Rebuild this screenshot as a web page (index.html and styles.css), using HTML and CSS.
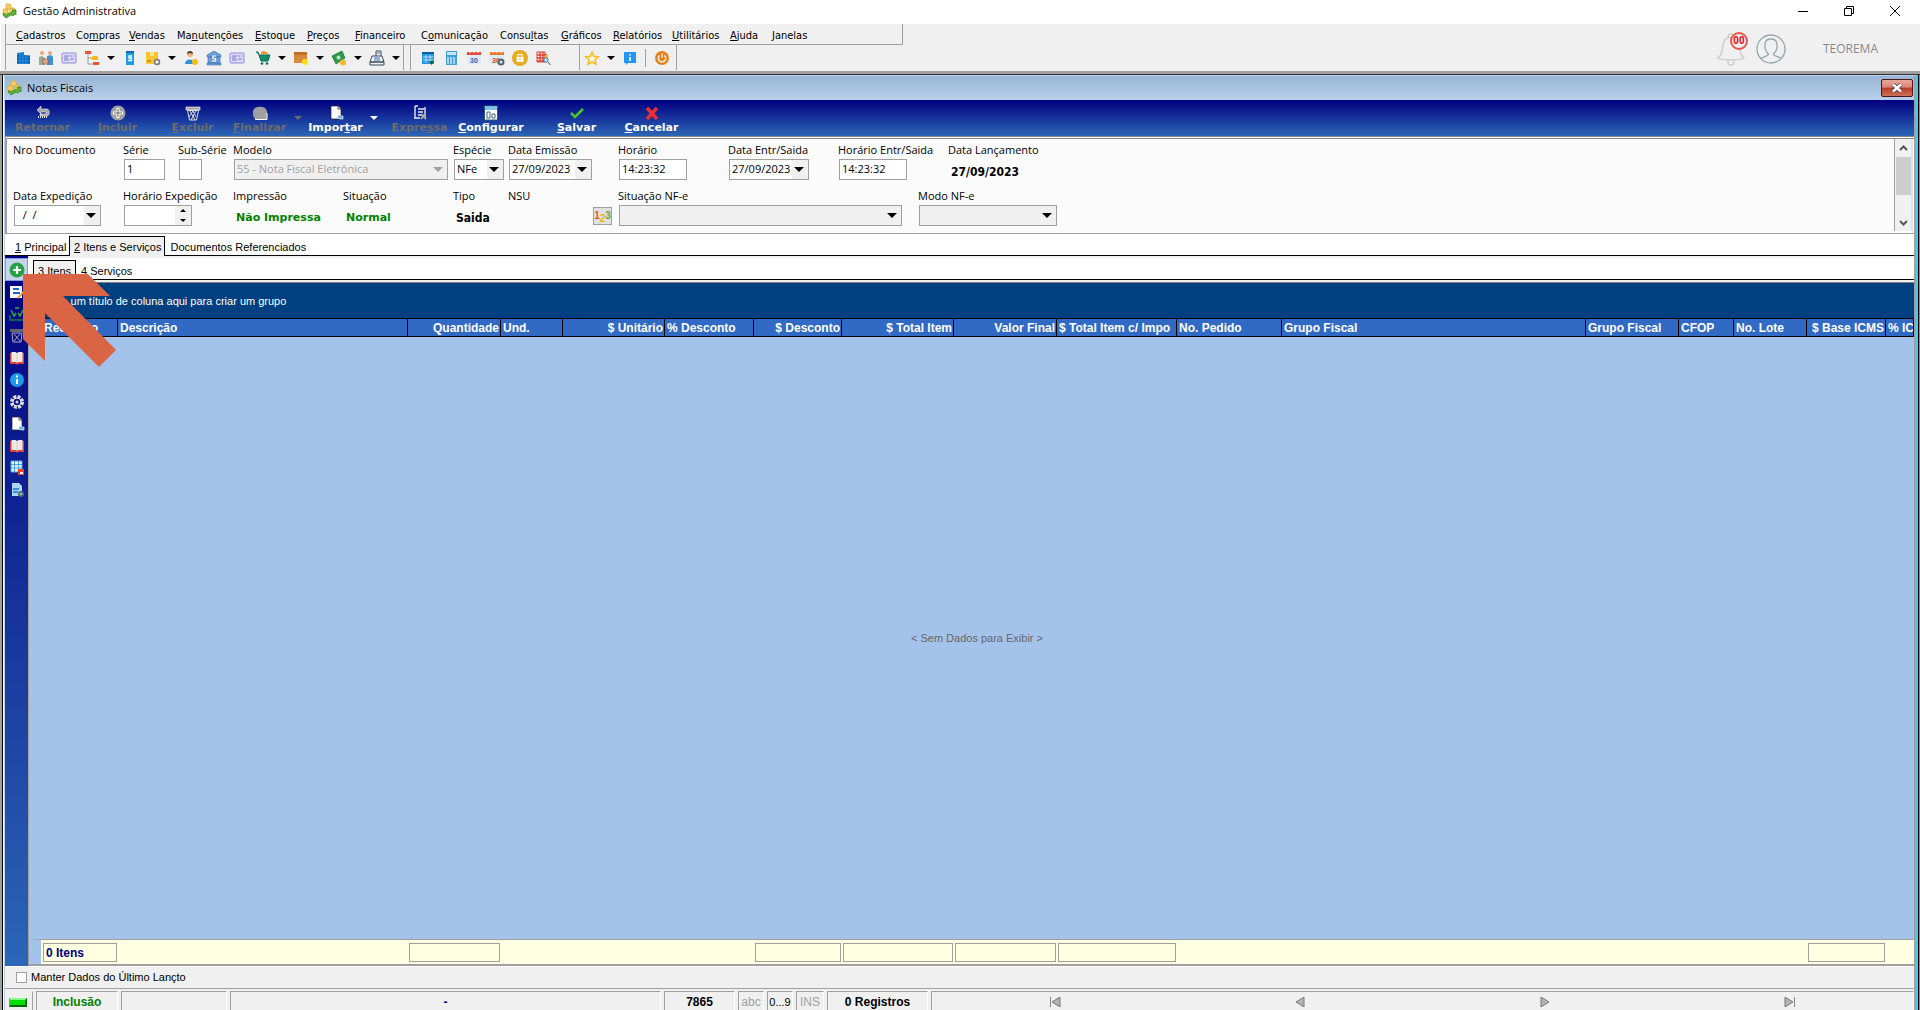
FILE: index.html
```html
<!DOCTYPE html>
<html lang="pt-BR">
<head>
<meta charset="utf-8">
<title>Gestão Administrativa</title>
<link rel="stylesheet" href="styles.css">
</head>
<body>
<svg class="sprite" aria-hidden="true">
  <symbol id="logo" viewBox="0 0 16 16"><path d="M4 1h4l1 1v4H4zM1 6h5v5H1z" fill="#f4cf5e" stroke="#d9a93a" stroke-width=".7"/><path d="M9 5h3l1 1v4H8V6z" fill="#f1c65a" stroke="#d9a93a" stroke-width=".7"/><path d="M1 12l3 3 5-3 2 1 2-2 1 1V7h-4l1 1-2 2H7l-3 2-2-2z" fill="#5fb336" stroke="#3a7d22" stroke-width=".7"/></symbol>
  <symbol id="card" viewBox="0 0 16 16"><rect x="1" y="3" width="14" height="10" rx="1" fill="#dcdafa" stroke="#8f8bdc"/><path d="M3 6h5M3 8h4M3 10h5M9 6h2M12 6h1M9 9h4" stroke="#7d79cf"/></symbol>
  <symbol id="book" viewBox="0 0 16 16"><path d="M1 3h14v11H9l-1 1-1-1H1z" fill="#d9433a"/><path d="M2.500 2h4L8 3l1.500-1h4v10H9l-1 1-1-1H2.500z" fill="#eee9e6"/><path d="M8 3v9" stroke="#cfc8c4" stroke-width=".7"/></symbol>
  <symbol id="page" viewBox="0 0 16 16"><path d="M3 1h7l3 3v10H3z" fill="#fff" stroke="#222" stroke-width=".7"/><path d="M10 1v3h3" fill="#ddd" stroke="#222" stroke-width=".7"/><path d="M9 12l3-3v2h3v3h-3z" fill="#5aaee0" stroke="#fff" stroke-width=".6"/></symbol>
  <symbol id="cal" viewBox="0 0 16 16"><path d="M1 4h14v10H1z" fill="#dcebf8"/><path d="M1 2h14v3H1z" fill="currentColor"/><path d="M4 1v2M8 1v2M12 1v2" stroke="#fff"/></symbol>
</svg>

<header class="titlebar">
  <svg class="i16"><use href="#logo"/></svg>
  <h1>Gestão Administrativa</h1>
  <div class="wincontrols">
    <button aria-label="Minimizar"><svg viewBox="0 0 10 10"><path d="M0 5.500h10" stroke="#000" fill="none"/></svg></button>
    <button aria-label="Restaurar"><svg viewBox="0 0 10 10"><path d="M.5 2.500h7v7h-7zM2.500 2.500v-2h7v7h-2" stroke="#000" fill="none"/></svg></button>
    <button aria-label="Fechar"><svg viewBox="0 0 10 10"><path d="M0 0l10 10M10 0L0 10" stroke="#000" fill="none"/></svg></button>
  </div>
</header>

<div class="top">
  <div class="bars">
    <nav class="menubar">
      <a href="#"><u>C</u>adastros</a><a href="#">Co<u>m</u>pras</a><a href="#"><u>V</u>endas</a><a href="#">Ma<u>n</u>utenções</a><a href="#"><u>E</u>stoque</a><a href="#"><u>P</u>reços</a><a href="#"><u>F</u>inanceiro</a><a href="#">C<u>o</u>municação</a><a href="#">Consu<u>l</u>tas</a><a href="#"><u>G</u>ráficos</a><a href="#"><u>R</u>elatórios</a><a href="#"><u>U</u>tilitários</a><a href="#"><u>A</u>juda</a><a href="#"><u>J</u>anelas</a>
    </nav>
    <div class="iconbar">
      <div class="group group-main">
        <button aria-label="Empresas"><svg viewBox="0 0 16 16"><path d="M2 3l7-1v3l6 1v8H2z" fill="#1380dc"/><path d="M2 6h13M2 9h13M2 12h13" stroke="#0a4f94"/><path d="M5 4v10M8 5v9M11 6v8" stroke="#3fa4ee" stroke-width=".7"/></svg></button>
        <button aria-label="Pessoas"><svg viewBox="0 0 16 16"><circle cx="4" cy="3" r="2" fill="#e8a77c"/><circle cx="12" cy="3" r="2" fill="#e8a77c"/><path d="M1 15V7l3-1 3 2v7z" fill="#8fae98"/><path d="M9 15V6l4-1 2 2v8z" fill="#3d8fd6"/><path d="M5 9h5v5H5z" fill="#e9a28b" stroke="#a9563c" stroke-width=".7"/></svg></button>
        <button aria-label="Cadastro"><svg><use href="#card"/></svg></button>
        <button aria-label="Estrutura"><svg viewBox="0 0 16 16"><path d="M4 4v10h5M4 8h5" fill="none" stroke="#888" stroke-width=".8"/><path d="M1 1h6v3H1zM9 12h6v3H9z" fill="#f0512d"/><path d="M8 6h6v4H8z" fill="#fbb917"/></svg></button>
        <button class="drop" aria-label="Mais estruturas"></button>
        <button aria-label="Preço"><svg viewBox="0 0 16 16"><path d="M4 1h8v14H4z" fill="#1b9be8"/><path d="M4 1h8v2H4z" fill="#0c6fb4"/><path d="M10 6H7v2h2.500v2.500H6" fill="none" stroke="#fff" stroke-width="1.300"/></svg></button>
        <button aria-label="Produtos"><svg viewBox="0 0 16 16"><path d="M1 2h12v12H1z" fill="#f9c52f"/><path d="M5 2h4v4H5z" fill="#fbe08b"/><path d="M2 11h4" stroke="#8a6a10"/><circle cx="12" cy="12" r="2.500" fill="#eee" stroke="#777" stroke-width="1.500"/></svg></button>
        <button class="drop" aria-label="Mais produtos"></button>
        <button aria-label="Cliente"><svg viewBox="0 0 16 16"><circle cx="7" cy="4" r="3" fill="#f0b078"/><path d="M4 4c0-4 6-4 6 0L7 3z" fill="#443"/><path d="M2 14c0-6 9-6 10 0z" fill="#2b8fdd"/><circle cx="12" cy="12" r="3" fill="#fbb917"/></svg></button>
        <button aria-label="Banco"><svg viewBox="0 0 16 16"><path d="M1 5l7-4 7 4v2H1zM1 13h14v2H1zM2 7h12v6H2z" fill="#6d9fd6" stroke="#3d74b5" stroke-width=".6"/><path d="M10 6H7v2.500h2.500V11H6" fill="none" stroke="#fff" stroke-width="1.200"/></svg></button>
        <button aria-label="Documento"><svg><use href="#card"/></svg></button>
        <button class="spaced" aria-label="Vendas"><svg viewBox="0 0 16 16"><path d="M1 2h2l3 9h7l2-6H4" fill="#178a6b" stroke="#0f6d53"/><path d="M6 4V2l3-1 4 2v1z" fill="#f6941d"/><circle cx="7" cy="13.500" r="1.300" fill="#0f6d53"/><circle cx="12" cy="13.500" r="1.300" fill="#0f6d53"/></svg></button>
        <button class="drop" aria-label="Mais vendas"></button>
        <button aria-label="Estoque"><svg viewBox="0 0 16 16"><path d="M1 2h13v11H1z" fill="#d88a3c"/><path d="M1 2h13v3H1z" fill="#c06f22"/><circle cx="12" cy="12" r="3" fill="#ffe11b"/></svg></button>
        <button class="drop" aria-label="Mais estoque"></button>
        <button aria-label="Dinheiro"><svg viewBox="0 0 16 16"><path d="M1 6l10-5 3 7-9 6z" fill="#2f9a4a" stroke="#176a2c" stroke-width=".7"/><circle cx="7.500" cy="7.500" r="2" fill="#bfe7c4"/><circle cx="12" cy="12.500" r="3" fill="#f5b62a"/></svg></button>
        <button class="drop" aria-label="Mais dinheiro"></button>
        <button aria-label="Caixa"><svg viewBox="0 0 16 16"><path d="M7 6V1h5v5M3 6h10l2 6H1zM1 12h14v3H1z" fill="#eef2f7" stroke="#3c4856"/><path d="M5 8h6M5 10h6M8 3h3" stroke="#3c78c0"/></svg></button>
        <button class="drop" aria-label="Mais caixa"></button>
      </div>
      <div class="group group-tools">
        <button aria-label="Agenda"><svg viewBox="0 0 16 16"><path d="M2 2h12v12H2z" fill="#2196e8"/><path d="M2 2h12v2H2z" fill="#0c5f9e"/><path d="M3 7h10M3 10h10M6 5v8M10 5v8" stroke="#b5defa"/><path d="M9 11h5l-2.500 4z" fill="#153"/></svg></button>
        <button aria-label="Calculadora"><svg viewBox="0 0 16 16"><path d="M3 1h11v14H3z" fill="#3f9fd9"/><path d="M4 2h9v3H4z" fill="#c6e8fb"/><path d="M5 7v7M8 7v7M11 7v7" stroke="#c6e8fb" stroke-width="1.500"/></svg></button>
        <button class="red" aria-label="Calendário"><svg viewBox="0 0 16 16"><use href="#cal"/><text x="8" y="12.500" class="caltext">30</text></svg></button>
        <button class="orange" aria-label="Configurar calendário"><svg viewBox="0 0 16 16"><use href="#cal"/><text x="7" y="12.500" class="caltext calred">30</text><circle cx="12" cy="12" r="2.500" fill="none" stroke="#4f6270" stroke-width="2"/></svg></button>
        <button aria-label="Bloquear"><svg viewBox="0 0 16 16"><circle cx="8" cy="8" r="8" fill="#e6ab1c"/><path d="M4.500 7h7v5h-7z" fill="#fff"/><path d="M6 7V4.500h4V7" fill="none" stroke="#fff" stroke-width="1.200"/><path d="M8 8v2" stroke="#e6ab1c"/></svg></button>
        <button aria-label="Pesquisar grade"><svg viewBox="0 0 16 16"><path d="M2 2h8v10H2z" fill="#fff" stroke="#e03c31"/><path d="M2 5h10M2 8h10M2 11h7M5 2v10M8 2v10" stroke="#e03c31" stroke-width="1.300"/><path d="M10 5h3v3h-3z" fill="#fbb917"/><circle cx="11" cy="10" r="2.200" fill="#bfe3fa" stroke="#3a7fb5"/><path d="M13 12l2.500 3" stroke="#555"/></svg></button>
      </div>
      <div class="group group-fav">
        <button aria-label="Favoritos"><svg viewBox="0 0 16 16"><path d="M8 2l1.800 4.300 4.700.4-3.500 3 1 4.500L8 11.800 4 14.200l1-4.500-3.500-3 4.700-.4z" fill="#fff6d5" stroke="#fbb917" stroke-width="1.400"/></svg></button>
        <button class="drop" aria-label="Mais favoritos"></button>
        <button aria-label="Informação"><svg viewBox="0 0 16 16"><path d="M2 2h12v11H6l-2 2v-2H2z" fill="#2196f3"/><path d="M8 4v1.500M8 7v4" stroke="#fff" stroke-width="1.600"/></svg></button>
        <span class="vsep"></span>
        <button aria-label="Sair"><svg viewBox="0 0 16 16"><circle cx="8" cy="8" r="7" fill="#e8811f"/><path d="M5.500 5.500a3.700 3.700 0 1 0 5 0M8 3.500v4" fill="none" stroke="#fff" stroke-width="1.300"/></svg></button>
      </div>
    </div>
  </div>
  <div class="user">
    <div class="bell">
      <svg viewBox="0 0 28 34"><path d="M11 5a3 3 0 0 1 6 0M11 28v2a3 3 0 0 0 6 0v-2M1 26c4-3 4-7 5-13C7 7 10 5 14 5s7 2 8 8c1 6 1 10 5 13-3 2.500-23 2.500-26 0z" fill="none" stroke="#cfcfcf" stroke-width="1.600"/></svg>
      <span class="badge">00</span>
    </div>
    <svg class="avatar" viewBox="0 0 30 30"><circle cx="15" cy="15" r="14" fill="none" stroke="#95a5a6" stroke-width="1.300"/><path d="M5 25c1-3 7-2 7.500-5-4-3-4-9-3-12 1.500-4 9.500-4 11 0 1 3 1 9-3 12 .5 3 6.500 2 7.500 5" fill="none" stroke="#95a5a6" stroke-width="1.300"/></svg>
    <span class="username">TEOREMA</span>
  </div>
</div>

<main class="mdi">
  <div class="mdi-title">
    <svg class="i16"><use href="#logo"/></svg>
    <h2>Notas Fiscais</h2>
    <button class="mdi-close" aria-label="Fechar janela"><svg viewBox="0 0 12 10"><path d="M2 1.500l8 7M10 1.500l-8 7" stroke="#445" stroke-width="4"/><path d="M2 1.500l8 7M10 1.500l-8 7" stroke="#fff" stroke-width="2.400"/></svg></button>
  </div>

  <div class="actions">
    <button class="act" disabled><svg viewBox="0 0 16 16"><path d="M2 5l4-4v3h6c3 0 3 7 0 7H5V9h6V7H6v2z" fill="#a8a8a8" stroke="#fff" stroke-width=".5"/><path d="M3 12h9" stroke="#ddd" stroke-dasharray="1 1" stroke-width="2"/></svg><span>Retornar</span></button>
    <button class="act" disabled><svg viewBox="0 0 16 16"><circle cx="8" cy="8" r="7.500" fill="#a0a0a0"/><path d="M8 3v10M3 8h10" stroke="#fff" stroke-width="3"/><path d="M8 4v8M4 8h8" stroke="#666" stroke-width="1"/></svg><span><u>I</u>ncluir</span></button>
    <button class="act" disabled><svg viewBox="0 0 16 16"><path d="M1 2h14v3H1z" fill="#a8a8a8" stroke="#fff" stroke-width=".6"/><path d="M2.500 5.500h11l-2 9.500h-7zM5 6l5 9M8 6l3 6M11 6L6 15M8 6l-4 6" fill="none" stroke="#ddd"/></svg><span><u>E</u>xcluir</span></button>
    <button class="act short" disabled><svg viewBox="0 0 16 16"><path d="M1 7c0-7 14-7 14 0v7H3c-2-2-2-5-2-7z" fill="#a0a0a0"/><path d="M3 14.500h12V8" fill="none" stroke="#fff"/></svg><span><u>F</u>inalizar</span></button>
    <button class="actdrop" aria-label="Opções de finalizar" disabled></button>
    <button class="act short"><svg><use href="#page"/></svg><span>Impor<u>t</u>ar</span></button>
    <button class="actdrop" aria-label="Opções de importar"></button>
    <button class="act" disabled><svg viewBox="0 0 16 16"><path d="M3 1v13M3 1h3M3 13h5M6 4h6M6 7h5M6 10h4M13 2v10" stroke="#e8e8e8" stroke-width="1.400"/><path d="M9 9l5 5M13 9l-4 5" stroke="#a8a8a8" stroke-width="2"/></svg><span>Expre<u>s</u>sa</span></button>
    <button class="act wide"><svg viewBox="0 0 16 16"><path d="M1.500 1h13v14h-13z" fill="#fff" stroke="#1c5c86"/><path d="M2 2h12v3H2z" fill="#7fc0ea"/><path d="M4 7h3v6H4zM9 9h3v4H9z" fill="#fff" stroke="#47657c"/></svg><span><u>C</u>onfigurar</span></button>
    <button class="act"><svg viewBox="0 0 16 16"><path d="M2 8l4 4 8-8" fill="none" stroke="#49c42c" stroke-width="2.500"/></svg><span><u>S</u>alvar</span></button>
    <button class="act"><svg viewBox="0 0 16 16"><path d="M3 3l10 11M13 3L3 14" stroke="#ea2f35" stroke-width="3.600"/></svg><span><u>C</u>ancelar</span></button>
  </div>

  <div class="formwrap">
    <form class="fields">
      <div class="field c1"><span class="lbl">Nro Documento</span></div>
      <div class="field c2"><label for="serie">Série</label><input id="serie" class="w-serie" value="1"></div>
      <div class="field c3"><label for="sub">Sub-Série</label><input id="sub" class="w-sub"></div>
      <div class="field c4"><label for="modelo">Modelo</label><span class="combo gray off w-modelo"><select id="modelo" disabled><option>55 - Nota Fiscal Eletrônica</option></select></span></div>
      <div class="field c6"><label for="especie">Espécie</label><span class="combo w-esp"><select id="especie"><option>NFe</option></select></span></div>
      <div class="field c7"><label for="emissao">Data Emissão</label><span class="combo w-date"><input id="emissao" value="27/09/2023"></span></div>
      <div class="field c8"><label for="hora">Horário</label><input id="hora" class="w-time" value="14:23:32"></div>
      <div class="field c9"><label for="entr">Data Entr/Saida</label><span class="combo w-date2"><input id="entr" value="27/09/2023"></span></div>
      <div class="field c10"><label for="hentr">Horário Entr/Saida</label><input id="hentr" class="w-time" value="14:23:32"></div>
      <div class="field c12"><span class="lbl">Data Lançamento</span><strong>27/09/2023</strong></div>

      <div class="field r2 c1"><label for="exped">Data Expedição</label><span class="combo w-exp"><input id="exped" value="  /  /"></span></div>
      <div class="field r2 c2"><label for="hexp">Horário Expedição</label><span class="spin w-time"><input id="hexp"><span class="spinbtns"><button type="button" aria-label="Aumentar"></button><button type="button" class="dn" aria-label="Diminuir"></button></span></span></div>
      <div class="field r2 c4"><span class="lbl">Impressão</span><strong class="green">Não Impressa</strong></div>
      <div class="field r2 c5"><span class="lbl">Situação</span><strong class="green">Normal</strong></div>
      <div class="field r2 c6"><span class="lbl">Tipo</span><strong>Saida</strong></div>
      <div class="field r2 c7"><span class="lbl">NSU</span><button type="button" class="nsu" aria-label="Gerar NSU"><b class="n1">1</b><b class="n2">2</b><b class="n3">3</b></button></div>
      <div class="field r2 c8"><label for="sitnfe">Situação NF-e</label><span class="combo gray w-sit"><select id="sitnfe"><option></option></select></span></div>
      <div class="field r2 c11"><label for="modo">Modo NF-e</label><span class="combo gray w-modo"><select id="modo"><option></option></select></span></div>
    </form>
    <div class="scroll">
      <svg viewBox="0 0 9 6"><path d="M1 5l3.500-3.500L8 5" fill="none" stroke="#555" stroke-width="2"/></svg>
      <span class="thumb"></span>
      <svg viewBox="0 0 9 6"><path d="M1 1l3.500 3.500L8 1" fill="none" stroke="#555" stroke-width="2"/></svg>
    </div>
  </div>

  <nav class="tabs">
    <a href="#"><u>1</u> Principal</a><a href="#" class="on"><u>2</u> Itens e Serviços</a><a href="#">Documentos Referenciados</a>
  </nav>

  <div class="work">
    <aside class="side">
      <button class="hot" aria-label="Adicionar"><svg viewBox="0 0 16 16"><circle cx="8" cy="8" r="7.500" fill="#25a244"/><path d="M8 4v8M4 8h8" stroke="#fff" stroke-width="2.200"/></svg></button>
      <button aria-label="Editar"><svg viewBox="0 0 16 16"><path d="M1 2h12v12H1z" fill="#f3f6fa"/><path d="M4 5h6M4 9h7" stroke="#1b64d2" stroke-width="2"/><path d="M8 14l6-7 1.500 1.500-6 6z" fill="#f59a1c"/></svg></button>
      <button aria-label="Reciclar"><svg viewBox="0 0 16 16"><path d="M1 9v5h14V9" fill="none" stroke="#1d7a45" stroke-width="1.300"/><path d="M6 2h4M2 4l3 6 2-3M14 4l-3 6-2-3" fill="none" stroke="#2fae35" stroke-width="1.400"/></svg></button>
      <button aria-label="Excluir item"><svg viewBox="0 0 16 16"><path d="M1 1h14v3H1z" fill="#666"/><path d="M3 5h10l-1 9H4zM5 6l6 7M11 6l-6 7" fill="none" stroke="#aab"/></svg></button>
      <button aria-label="Livro"><svg><use href="#book"/></svg></button>
      <button aria-label="Informações"><svg viewBox="0 0 16 16"><circle cx="8" cy="8" r="7" fill="#1c9be6"/><path d="M8 3.500v2M8 7v5" stroke="#fff" stroke-width="2"/></svg></button>
      <button aria-label="Configurações"><svg viewBox="0 0 16 16"><circle cx="8" cy="8" r="5.500" fill="none" stroke="#dcdcdc" stroke-width="3" stroke-dasharray="3 1.300"/><circle cx="8" cy="8" r="4" fill="none" stroke="#eee"/><circle cx="8" cy="8" r="1.500" fill="#ccc"/></svg></button>
      <button aria-label="Importar página"><svg><use href="#page"/></svg></button>
      <button aria-label="Catálogo"><svg><use href="#book"/></svg></button>
      <button aria-label="Salvar grade"><svg viewBox="0 0 16 16"><path d="M2 1h11v11H2z" fill="#eaf5ff"/><path d="M2 1h11v11H2zM2 4.500h11M2 8h11M5.500 1v11M9.500 1v11" fill="none" stroke="#4aa3e6"/><path d="M9 9h6v6H9z" fill="#f0431f"/><path d="M11 12h3v2h-3z" fill="#fff"/></svg></button>
      <button aria-label="Configurar relatório"><svg viewBox="0 0 16 16"><path d="M3 1h7l3 3v10H3z" fill="#a9d6fb"/><path d="M4 7h6M4 10h5" stroke="#1976d2" stroke-width="1.300"/><circle cx="12" cy="12" r="2.200" fill="#8ca" stroke="#4f6577" stroke-width="1.700"/></svg></button>
    </aside>
    <section class="detail">
      <nav class="tabs sub">
        <a href="#" class="on">3 Itens</a><a href="#">4 Serviços</a>
      </nav>
      <div class="groupby">Arraste um título de coluna aqui para criar um grupo</div>
      <div class="gridbox">
        <table class="grid">
          <colgroup><col class="k1"><col class="k2"><col class="k3"><col class="k4"><col class="k5"><col class="k6"><col class="k7"><col class="k8"><col class="k9"><col class="k10"><col class="k11"><col class="k12"><col class="k3"><col class="k14"><col class="k15"><col class="k16"><col></colgroup>
          <thead><tr><th class="first">Reduzido</th><th>Descrição</th><th class="num">Quantidade</th><th>Und.</th><th class="num">$ Unitário</th><th>% Desconto</th><th class="num">$ Desconto</th><th class="num">$ Total Item</th><th class="num">Valor Final</th><th>$ Total Item c/ Impo</th><th>No. Pedido</th><th>Grupo Fiscal</th><th>Grupo Fiscal</th><th>CFOP</th><th>No. Lote</th><th class="num">$ Base ICMS</th><th>% ICMS</th></tr></thead>
          <tbody><tr><td colspan="17">&lt; Sem Dados para Exibir &gt;</td></tr></tbody>
          <tfoot><tr><td class="first"><span>0 Itens</span></td><td></td><td><span></span></td><td></td><td></td><td></td><td><span></span></td><td><span></span></td><td><span></span></td><td><span></span></td><td></td><td></td><td></td><td></td><td></td><td><span></span></td><td></td></tr></tfoot>
        </table>
      </div>
    </section>
  </div>

  <label class="keep"><input type="checkbox"> Manter Dados do Último Lançto</label>

  <footer class="status">
    <div class="s-led"><span class="led"></span></div>
    <div class="s-mode">Inclusão</div>
    <div class="s-blank"></div>
    <div class="s-msg">-</div>
    <div class="s-id">7865</div>
    <div class="s-key dim">abc</div>
    <div class="s-key plain">0...9</div>
    <div class="s-ins dim">INS</div>
    <div class="s-reg">0 Registros</div>
    <div class="s-nav">
      <button aria-label="Primeiro"><svg viewBox="0 0 12 10"><path d="M1.500 0v10" stroke="#888"/><path d="M11 0v10L3 5z" fill="#b5b5b5" stroke="#777"/></svg></button>
      <button aria-label="Anterior"><svg viewBox="0 0 12 10"><path d="M10 0v10L2 5z" fill="#b5b5b5" stroke="#777"/></svg></button>
      <button aria-label="Próximo"><svg viewBox="0 0 12 10"><path d="M2 0v10l8-5z" fill="#b5b5b5" stroke="#777"/></svg></button>
      <button aria-label="Último"><svg viewBox="0 0 12 10"><path d="M10.500 0v10" stroke="#888"/><path d="M1 0v10l8-5z" fill="#b5b5b5" stroke="#777"/></svg></button>
    </div>
  </footer>
</main>

<svg class="pointer" viewBox="0 0 94 94" aria-hidden="true"><path d="M0 0h65l22 22H40l53 54-17 17-54-54v48L0 65z" fill="#d96544"/></svg>
</body>
</html>
```
FILE: styles.css
```css
* { box-sizing: border-box; }
body {
  margin: 0;
  height: 100vh;
  min-height: 600px;
  display: flex;
  flex-direction: column;
  overflow: hidden;
  background: #f0f0f0;
  color: #000;
  font: 11px/14px "Liberation Sans", Arial, sans-serif;
}
button { padding: 0; border: 0; background: none; font: inherit; color: inherit; }
a { color: inherit; text-decoration: none; }
h1, h2 { margin: 0; font: 11px/16px "Open Sans", sans-serif; }
.sprite { position: absolute; width: 0; height: 0; }
.i16 { width: 16px; height: 16px; }

/* application title */
.titlebar { display: flex; align-items: center; height: 24px; padding: 0 2px 2px; gap: 5px; background: #fff; }
.wincontrols { display: flex; margin-left: auto; }
.wincontrols button { width: 46px; height: 20px; display: grid; place-items: center; }
.wincontrols svg { width: 10px; height: 10px; }

/* menus and icon bars */
.top { display: flex; justify-content: space-between; height: 50px; border-bottom: 3px solid #a0a0a0; box-shadow: inset 1px 0 #fff; }
.bars { width: 903px; }
.menubar {
  display: grid;
  grid-template-columns: 60px 53px 48px 78px 52px 48px 66px 79px 61px 52px 59px 58px 42px 1fr;
  align-items: center;
  height: 21px;
  margin-left: 5px;
  padding: 3px 0 0 10px;
  border: solid #a0a0a0;
  border-width: 0 1px 1px;
  font: 11px/14px "DejaVu Sans Condensed", sans-serif;
}
.iconbar { display: flex; height: 26px; }
.group { display: flex; align-items: center; height: 25px; border-right: 1px solid #a0a0a0; }
.group-main { margin-left: 5px; padding-left: 5px; border-left: 1px solid #a0a0a0; }
.group-tools { margin-left: 6px; padding: 0 25px 0 5px; border-left: 1px solid #a0a0a0; }
.group-fav { flex: none; width: 97px; }
.group button { flex: none; width: 23px; height: 24px; display: grid; place-items: center; }
.group svg { width: 16px; height: 16px; }
.group button.drop { width: 15px; }
.group .spaced { margin-left: 3px; }
.drop::after, .actdrop::after, .combo::after {
  content: "";
  width: 0;
  height: 0;
  border: 4px solid transparent;
  border-top-color: #000;
  border-bottom: 0;
}
.vsep { width: 1px; height: 18px; margin: 0 4px; background: #a0a0a0; }
.red { color: #ea4a3d; }
.orange { color: #ee7b28; }
.caltext { font: bold 7px "Liberation Sans", sans-serif; text-anchor: middle; fill: #2a66c0; }
.calred { fill: #d8432f; }
.user { display: flex; align-items: center; padding: 3px 38px 0 0; }
.bell { position: relative; width: 28px; height: 34px; margin-right: 11px; }
.bell svg { width: 28px; height: 34px; }
.badge {
  position: absolute;
  left: 13px;
  top: 0;
  width: 18px;
  height: 18px;
  border: 2px solid #e8564a;
  border-radius: 50%;
  background: #f0f0f0;
  color: #f00000;
  font: bold 10px/14px "Liberation Sans", sans-serif;
  text-align: center;
}
.avatar { width: 30px; height: 30px; margin-right: 37px; }
.username { padding-right: 4px; color: #8a8a8a; font: 12px/16px "Open Sans", sans-serif; }

/* document window */
.mdi {
  flex: 1;
  min-height: 0;
  display: flex;
  flex-direction: column;
  padding: 2px 6px 0 5px;
  background: #f0f0f0;
  box-shadow: inset 0 1px #333, inset 2px 0 #a0a0a0, inset -1px 0 #888, inset 3px 0 #000, inset -2px 0 #000, inset 4px 0 #fff, inset -4px 0 #4cc8ee, inset 5px 2px #b9d1ea, inset -6px 0 #a0a0a0;
}
.mdi-title {
  display: flex;
  align-items: center;
  flex: none;
  height: 24px;
  padding: 0 1px 0 2px;
  gap: 4px;
  background: linear-gradient(#98b4d2, #b9d1ea);
}
.mdi-close {
  display: grid;
  place-items: center;
  width: 32px;
  height: 18px;
  margin-left: auto;
  border: 1px solid #4a1418;
  border-radius: 2px;
  background: linear-gradient(#e8a79b, #d98476 45%, #b83a22 50%, #cf7058);
}
.mdi-close svg { width: 12px; height: 10px; }
.actions { display: flex; flex: none; height: 36px; background: linear-gradient(#000080, #2c66b6); }
.act {
  display: flex;
  flex-direction: column;
  align-items: center;
  width: 75px;
  padding-top: 5px;
  color: #fff;
  font: bold 11px/14px "DejaVu Sans", sans-serif;
}
.act svg { width: 16px; height: 16px; }
.act.short { width: 59px; }
.act.wide { width: 68px; margin-right: 14px; }
.act:disabled { color: #6d6d6d; }
.actdrop { width: 17px; display: grid; place-items: center; }
.actdrop::after { border-top-color: #fff; }
.actdrop:disabled::after { border-top-color: #6d6d6d; }

/* header fields */
.formwrap {
  display: flex;
  flex: none;
  justify-content: space-between;
  height: 98px;
  padding: 0 1px 2px 0;
  border-top: 3px double #888;
  border-bottom: 1px solid #a0a0a0;
  border-left: 2px solid #a0a0a0;
  background: #fbfbfb;
}
.fields {
  display: grid;
  grid-template-columns: 110px 55px 55px 110px 110px 55px 110px 110px 110px 80px 30px 140px;
  grid-template-rows: 46px 46px;
  padding-left: 6px;
  font: 11px/16px "Open Sans", sans-serif;
}
.field { grid-row: 1; padding-top: 3px; white-space: nowrap; min-width: 0; }
.r2 { grid-row: 2; }
.c1 { grid-column: 1; } .c2 { grid-column: 2; } .c3 { grid-column: 3; } .c4 { grid-column: 4; }
.c5 { grid-column: 5; } .c6 { grid-column: 6; } .c7 { grid-column: 7; } .c8 { grid-column: 8; }
.c9 { grid-column: 9; } .c10 { grid-column: 10; } .c11 { grid-column: 11; } .c12 { grid-column: 12; }
.field label, .lbl { display: block; height: 17px; line-height: 16px; }
.field input, .field select {
  display: block;
  height: 21px;
  margin: 0 0 0 1px;
  padding: 0 0 2px 2px;
  border: 1px solid #a0a0a0;
  border-radius: 0;
  background: #fff;
  color: #000;
  font: 11px/16px "Open Sans", sans-serif;
}
.combo, .spin {
  position: relative;
  display: flex;
  height: 21px;
  margin-left: 1px;
  border: 1px solid #a0a0a0;
  background: linear-gradient(#f0f0f0, #f0f0f0) right / 16px 100% no-repeat #fff;
}
.combo::after { position: absolute; right: 4px; top: 7px; border-width: 5px; border-bottom: 0; }
.combo.off::after { border-top-color: #a0a0a0; }
.combo.gray { background: #f0f0f0; }
.field .combo input, .field .combo select, .field .spin input {
  appearance: none;
  width: 100%;
  height: 19px;
  margin: 0;
  padding-left: 2px;
  border: 0;
  background: none;
}
.field .combo select:disabled { color: #a0a0a0; opacity: 1; }
.spinbtns { display: flex; flex-direction: column; width: 16px; flex: none; }
.spinbtns button { flex: 1; display: grid; place-items: center; }
.spinbtns button::after { content: ""; border: 3px solid transparent; border-bottom-color: #000; border-top: 0; }
.spinbtns .dn::after { border: 3px solid transparent; border-top-color: #000; border-bottom: 0; }
.w-serie { width: 41px; } .w-sub { width: 23px; } .w-modelo { width: 214px; } .w-esp { width: 50px; }
.w-date { width: 83px; } .w-date2 { width: 80px; } .w-time { width: 68px; } .w-exp { width: 87px; }
.w-sit { width: 283px; } .w-modo { width: 138px; }
.field strong { display: block; margin: 5px 0 0 3px; font: bold 11px/16px "DejaVu Sans", sans-serif; }
.field .green { color: #008000; }
.c12 strong, .c6 strong { font-family: "DejaVu Sans Condensed", sans-serif; font-size: 12px; }
.nsu { display: flex; align-items: center; justify-content: center; width: 19px; height: 18px; margin: 2px 0 0 85px; border: 1px solid #a0a0a0; background: #e1e1e1; font: bold 10px/10px "Liberation Sans", sans-serif; }
.n1 { color: #f4511e; } .n2 { color: #f5b400; padding-top: 5px; } .n3 { color: #689f38; }
.scroll {
  display: flex;
  flex-direction: column;
  align-items: center;
  justify-content: space-between;
  width: 19px;
  padding: 6px 0 5px;
  border-left: 1px solid #a0a0a0;
  border-right: 2px solid #e3e3e3;
  background: #f0f0f0;
}
.scroll svg { width: 9px; height: 6px; }
.thumb { width: 15px; height: 38px; margin-bottom: 20px; background: #cdcdcd; }

/* tabs */
.tabs { display: flex; flex: none; align-items: flex-end; height: 22px; padding-left: 3px; background: #fff; box-shadow: inset 0 -1px #000; }
.tabs a { height: 20px; padding: 0 3px 0 4px; line-height: 21px; border: 1px solid transparent; border-bottom: 0; white-space: nowrap; }
.tabs a.on { background: #f0f0f0; border-color: #000; }
.tabs a:first-child { width: 61px; padding-left: 6px; }
.tabs.sub { margin-top: 2px; padding-left: 5px; }
.tabs.sub a:first-child { width: 43px; padding-left: 4px; }

/* items area */
.work { display: flex; flex: 1; min-height: 0; }
.side { display: flex; flex-direction: column; flex: none; width: 23px; padding-top: 2px; background: linear-gradient(#000080, #2c66b6); }
.side button { display: grid; place-items: center; height: 22px; }
.side .hot { height: 23px; border: 1px solid #7b9be0; background: #c4d3ee; }
.side svg { width: 16px; height: 16px; }
.detail { display: flex; flex-direction: column; flex: 1; min-width: 0; }
.groupby { flex: none; height: 36px; margin-top: 2px; padding: 0 4px; border-top: 1px solid #808080; background: #004080; color: #fff; line-height: 36px; }
.gridbox { flex: 1; min-height: 0; overflow: hidden; border-left: 1px solid #a0a0a0; border-bottom: 2px solid #a0a0a0; background: #a4c3eb; }
.grid { width: 100%; height: 100%; table-layout: fixed; border-collapse: separate; border-spacing: 0; }
.k1 { width: 89px; } .k2 { width: 290px; } .k3 { width: 93px; } .k4 { width: 62px; } .k5 { width: 102px; }
.k6 { width: 89px; } .k7 { width: 88px; } .k8 { width: 112px; } .k9 { width: 103px; } .k10 { width: 120px; }
.k11 { width: 105px; } .k12 { width: 304px; } .k14 { width: 55px; } .k15 { width: 73px; } .k16 { width: 79px; }
.grid th {
  height: 19px;
  padding: 1px 1px 0 2px;
  border: solid #000;
  border-width: 1px 1px 1px 0;
  background: #316ac5;
  color: #fff;
  font: bold 12px/16px "Liberation Sans", Arial, sans-serif;
  text-align: left;
  white-space: nowrap;
  overflow: hidden;
}
.grid th.first { padding-left: 15px; }
.grid th.num { text-align: right; }
.grid tbody td { padding-left: 12px; color: #666; text-align: center; vertical-align: middle; }
.grid tfoot td { height: 25px; padding: 2px 1px; border-top: 1px solid #a0a0a0; background: #ffffe1; }
.grid tfoot span { display: block; height: 19px; border: 1px solid #a0a0a0; padding-left: 2px; color: #000080; font: bold 12px/18px "Liberation Sans", Arial, sans-serif; }
.grid tfoot td.first { padding-left: 2px; border-left: 12px solid #a4c3eb; }

.keep { display: flex; flex: none; align-items: center; gap: 4px; height: 23px; padding: 0 0 1px 11px; border-top: 1px solid #fff; border-bottom: 1px solid #a0a0a0; }
.keep input { appearance: none; width: 11px; height: 11px; margin: 0; border: 1px solid #a0a0a0; background: #fff; }

/* status bar */
.status { display: flex; flex: none; gap: 3px; height: 21px; padding-top: 2px; font: bold 12px/20px "Liberation Sans", Arial, sans-serif; text-align: center; }
.status > div { flex: none; border: 1px solid #a0a0a0; border-right-color: #fff; border-bottom: 0; }
.status .s-led { width: 28px; padding: 6px 0 0 4px; border-left: 0; border-color: #f0f0f0 #a0a0a0 #fff; }
.led { display: block; width: 18px; height: 9px; border: 2px solid; border-color: #8f8 #060 #060 #3c3; background: #00e000; }
.s-mode { width: 82px; color: #008000; }
.s-blank { width: 106px; }
.s-msg { width: 431px; color: #000080; }
.s-id { width: 71px; }
.s-key { width: 26px; }
.s-ins { width: 28px; }
.status .dim { color: #a0a0a0; font-weight: normal; }
.status .plain { font-weight: normal; font-size: 11px; }
.s-reg { width: 101px; }
.status .s-nav { display: grid; grid-template-columns: repeat(4, 1fr); flex: 1; }
.s-nav button { display: grid; place-items: center; padding-top: 2px; }
.s-nav svg { width: 12px; height: 10px; }

/* callout arrow laid over the grid */
.pointer { position: absolute; left: 23px; top: 274px; width: 94px; height: 94px; pointer-events: none; }
```
